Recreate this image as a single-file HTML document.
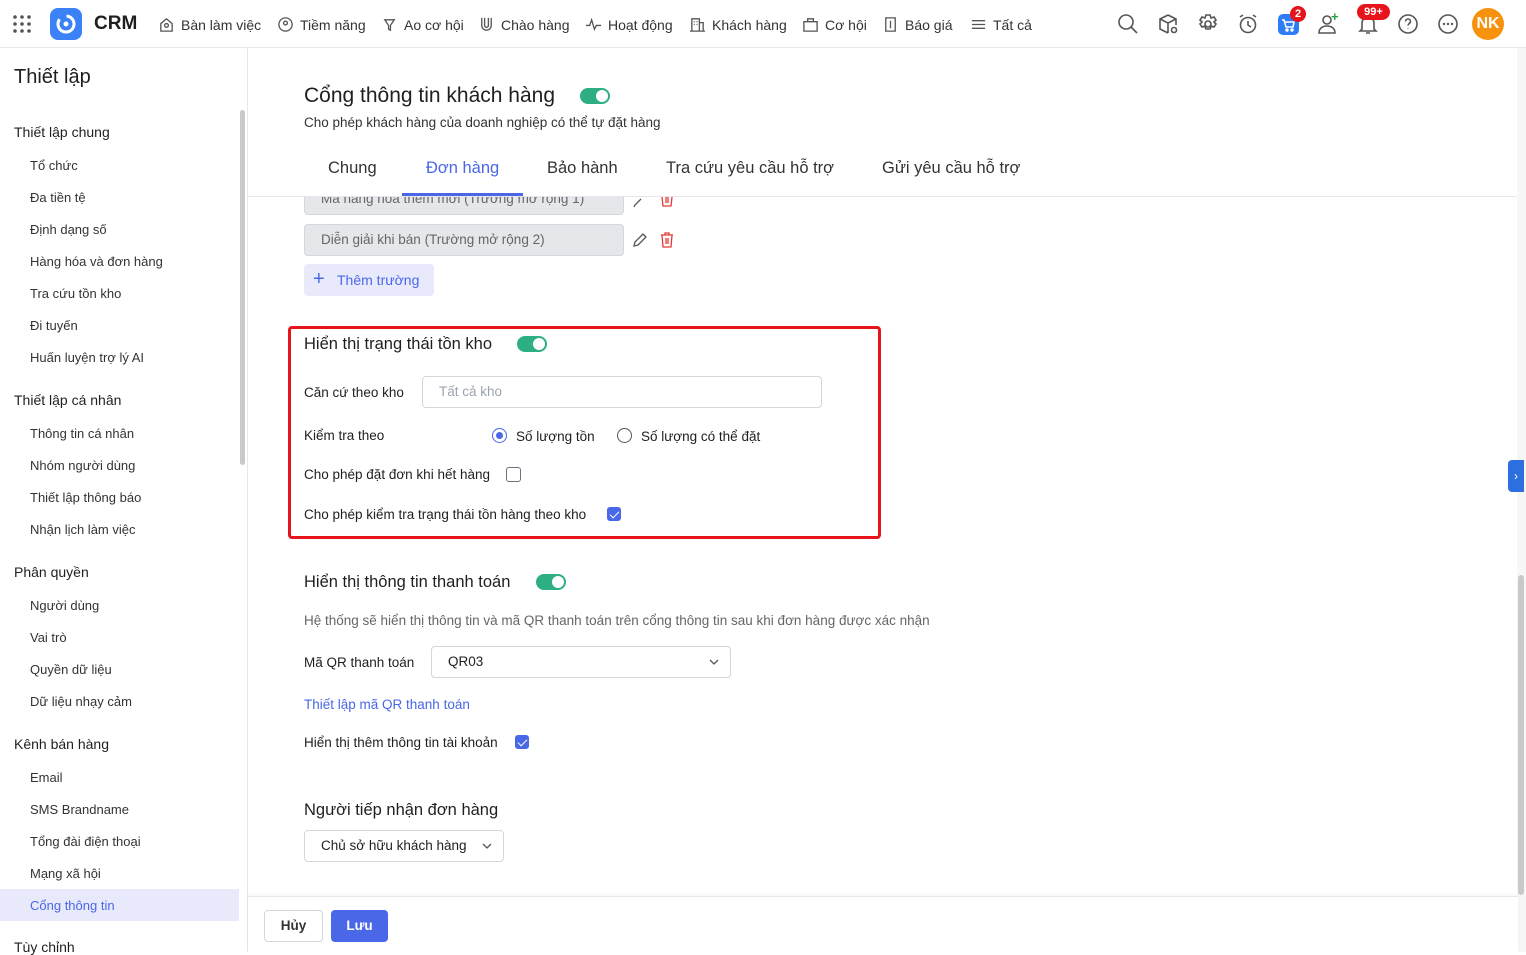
<!DOCTYPE html>
<html><head><meta charset="utf-8"><style>
*{box-sizing:border-box;margin:0;padding:0}
body{width:1526px;height:952px;overflow:hidden;background:#fff;font-family:"Liberation Sans","Noto Sans CJK SC",sans-serif;color:#1f1f1f;font-size:13.5px;position:relative}
.abs{position:absolute}
.hdr{left:0;top:0;width:1526px;height:48px;border-bottom:1px solid #e5e7eb;background:#fff}
.nav{top:16px;font-size:14px;color:#333;display:flex;align-items:center;gap:6px}
.nav svg{width:17px;height:17px;stroke:#555;fill:none;stroke-width:1.4}
.side{left:0;top:48px;width:248px;height:904px;border-right:1px solid #e5e7eb}
.st{position:absolute;left:14px;font-size:14px;color:#1f1f1f}
.si{position:absolute;left:30px;font-size:13px;color:#333}
.t{position:absolute;white-space:nowrap}
.field{position:absolute;left:304px;width:320px;height:32px;background:#e5e7eb;border:1px solid #d4d6db;border-radius:4px;color:#666;font-size:13.5px;padding:7px 16px}
.tog{position:absolute;width:30px;height:16px;border-radius:8px;background:#2eae84}
.tog:after{content:"";position:absolute;right:2px;top:2px;width:12px;height:12px;border-radius:50%;background:#fff}
.cb{position:absolute;width:15px;height:15px;border:1px solid #6b7280;border-radius:3px;background:#fff}
.cb.on{background:#4a67e8;border-color:#4a67e8}
.cb.on:after{content:"";position:absolute;left:4px;top:1px;width:4px;height:8px;border:solid #fff;border-width:0 1.5px 1.5px 0;transform:rotate(45deg)}
.ic{position:absolute;top:13px;width:22px;height:22px}
.ic svg{width:22px;height:22px;stroke:#555;fill:none;stroke-width:1.6}
</style></head><body>
<div class="abs hdr"></div>
<svg class="abs" style="left:12px;top:14px" width="20" height="20"><g fill="#555"><circle cx="3" cy="3" r="1.8"/><circle cx="10" cy="3" r="1.8"/><circle cx="17" cy="3" r="1.8"/><circle cx="3" cy="10" r="1.8"/><circle cx="10" cy="10" r="1.8"/><circle cx="17" cy="10" r="1.8"/><circle cx="3" cy="17" r="1.8"/><circle cx="10" cy="17" r="1.8"/><circle cx="17" cy="17" r="1.8"/></g></svg>
<div class="abs" style="left:50px;top:8px;width:32px;height:32px;border-radius:8px;background:#3b82f6"><svg width="32" height="32"><circle cx="16" cy="16" r="8" stroke="#fff" stroke-width="3" fill="none" stroke-dasharray="30 8"/><circle cx="16" cy="16" r="2.5" fill="#fff"/></svg></div>
<div class="t" style="left:94px;top:13px;font-size:19px;font-weight:bold">CRM</div>
<div class="abs nav" style="left:158px"><svg viewBox="0 0 18 18"><path d="M3 8l6-5 6 5v8H3z"/><circle cx="9" cy="10" r="2"/></svg>Bàn làm việc</div>
<div class="abs nav" style="left:277px"><svg viewBox="0 0 18 18"><circle cx="9" cy="9" r="7"/><circle cx="9" cy="7.5" r="2"/></svg>Tiềm năng</div>
<div class="abs nav" style="left:381px"><svg viewBox="0 0 18 18"><path d="M4 4h10l-4 6v5l-2-1v-4z"/></svg>Ao cơ hội</div>
<div class="abs nav" style="left:478px"><svg viewBox="0 0 18 18"><path d="M4 2v8a5 5 0 0010 0V2M7 2v8a2 2 0 004 0V2"/></svg>Chào hàng</div>
<div class="abs nav" style="left:585px"><svg viewBox="0 0 18 18"><path d="M1 10h4l2-6 3 10 2-4h5"/></svg>Hoạt động</div>
<div class="abs nav" style="left:689px"><svg viewBox="0 0 18 18"><path d="M3 16V3h8v13M11 7h4v9M1 16h16M5 6h1M8 6h1M5 9h1M8 9h1"/></svg>Khách hàng</div>
<div class="abs nav" style="left:802px"><svg viewBox="0 0 18 18"><path d="M2 6h14v10H2zM6 6V3h6v3"/></svg>Cơ hội</div>
<div class="abs nav" style="left:882px"><svg viewBox="0 0 18 18"><path d="M4 2h10v14H4zM9 5v8"/></svg>Báo giá</div>
<div class="abs nav" style="left:970px"><svg viewBox="0 0 18 18"><path d="M2 5h14M2 9h14M2 13h14"/></svg>Tất cả</div>
<div class="ic" style="left:1117px"><svg viewBox="0 0 22 22"><circle cx="9" cy="9" r="7"/><path d="M14 14l6 6"/></svg></div>
<div class="ic" style="left:1157px"><svg viewBox="0 0 22 22"><path d="M11 2l8 4v6M11 2L3 6v10l8 4M3 6l8 4 8-4M11 10v10"/><circle cx="17" cy="17" r="2.5"/></svg></div>
<div class="ic" style="left:1197px"><svg viewBox="0 0 22 22"><circle cx="11" cy="11" r="3"/><path d="M9 2h4l1 3 3-1 2 3-2 2 2 2-2 3-3-1-1 3H9l-1-3-3 1-2-3 2-2-2-2 2-3 3 1z"/></svg></div>
<div class="ic" style="left:1237px"><svg viewBox="0 0 22 22"><circle cx="11" cy="12" r="7.5"/><path d="M11 8v4l3 2M3 4l3-2M19 4l-3-2"/></svg></div>
<div class="abs" style="left:1278px;top:14px;width:21px;height:21px;border-radius:5px;background:#2e7cf6"><svg width="21" height="21" fill="none" stroke="#fff" stroke-width="1.5"><path d="M4 6h2l2 7h7l1-5H7"/><circle cx="9" cy="16" r="1" fill="#fff"/><circle cx="14" cy="16" r="1" fill="#fff"/></svg></div>
<div class="abs" style="left:1290px;top:6px;width:16px;height:16px;border-radius:8px;background:#e8141c;color:#fff;font-size:11px;font-weight:bold;text-align:center;line-height:16px">2</div>
<div class="ic" style="left:1317px"><svg viewBox="0 0 22 22"><circle cx="10" cy="7" r="4"/><path d="M2 20c0-5 4-7 8-7s8 2 8 7z"/></svg></div>
<div class="t" style="left:1331px;top:9px;color:#2ea043;font-weight:bold;font-size:13px">+</div>
<div class="ic" style="left:1357px"><svg viewBox="0 0 22 22"><path d="M5 16V10a6 6 0 0112 0v6l2 2H3zM9 20h4"/></svg></div>
<div class="abs" style="left:1357px;top:4px;width:33px;height:16px;border-radius:8px;background:#e8141c;color:#fff;font-size:11px;font-weight:bold;text-align:center;line-height:16px">99+</div>
<div class="ic" style="left:1397px"><svg viewBox="0 0 22 22"><circle cx="11" cy="11" r="9"/><path d="M8.5 8.5a2.5 2.5 0 115 0c0 2-2.5 2-2.5 4M11 15.5v.5"/></svg></div>
<div class="ic" style="left:1437px"><svg viewBox="0 0 22 22"><circle cx="11" cy="11" r="9"/><g fill="#555" stroke="none"><circle cx="7" cy="11" r="1.2"/><circle cx="11" cy="11" r="1.2"/><circle cx="15" cy="11" r="1.2"/></g></svg></div>
<div class="abs" style="left:1472px;top:8px;width:32px;height:32px;border-radius:50%;background:#f7920e;color:#fff;font-weight:bold;font-size:16px;text-align:center;line-height:32px">NK</div>

<div class="abs side"></div>
<div class="abs" style="left:240px;top:110px;width:5px;height:355px;background:#c9c9c9;border-radius:3px"></div>
<div class="t" style="left:14px;top:66px;font-size:20px">Thiết lập</div>
<div class="st" style="top:124px">Thiết lập chung</div>
<div class="si" style="top:158px">Tổ chức</div>
<div class="si" style="top:190px">Đa tiền tệ</div>
<div class="si" style="top:222px">Định dạng số</div>
<div class="si" style="top:254px">Hàng hóa và đơn hàng</div>
<div class="si" style="top:286px">Tra cứu tồn kho</div>
<div class="si" style="top:318px">Đi tuyến</div>
<div class="si" style="top:350px">Huấn luyện trợ lý AI</div>
<div class="st" style="top:392px">Thiết lập cá nhân</div>
<div class="si" style="top:426px">Thông tin cá nhân</div>
<div class="si" style="top:458px">Nhóm người dùng</div>
<div class="si" style="top:490px">Thiết lập thông báo</div>
<div class="si" style="top:522px">Nhận lịch làm việc</div>
<div class="st" style="top:564px">Phân quyền</div>
<div class="si" style="top:598px">Người dùng</div>
<div class="si" style="top:630px">Vai trò</div>
<div class="si" style="top:662px">Quyền dữ liệu</div>
<div class="si" style="top:694px">Dữ liệu nhạy cảm</div>
<div class="st" style="top:736px">Kênh bán hàng</div>
<div class="si" style="top:770px">Email</div>
<div class="si" style="top:802px">SMS Brandname</div>
<div class="si" style="top:834px">Tổng đài điện thoại</div>
<div class="si" style="top:866px">Mạng xã hội</div>
<div class="abs" style="left:0;top:889px;width:239px;height:32px;background:#e8eafc"></div>
<div class="si" style="top:898px;color:#4a67e8">Cổng thông tin</div>
<div class="st" style="top:939px">Tùy chỉnh</div>

<div class="t" style="left:304px;top:84px;font-size:21px">Cổng thông tin khách hàng</div>
<div class="tog" style="left:580px;top:88px"></div>
<div class="t" style="left:304px;top:115px;color:#333">Cho phép khách hàng của doanh nghiệp có thể tự đặt hàng</div>
<div class="t" style="left:328px;top:159px;font-size:16.5px;color:#333">Chung</div>
<div class="t" style="left:426px;top:159px;font-size:16.5px;color:#4a67e8">Đơn hàng</div>
<div class="abs" style="left:402px;top:193px;width:121px;height:3px;background:#4a67e8"></div>
<div class="t" style="left:547px;top:159px;font-size:16.5px;color:#333">Bảo hành</div>
<div class="t" style="left:666px;top:159px;font-size:16.5px;color:#333">Tra cứu yêu cầu hỗ trợ</div>
<div class="t" style="left:882px;top:159px;font-size:16.5px;color:#333">Gửi yêu cầu hỗ trợ</div>
<div class="abs" style="left:248px;top:196px;width:1270px;height:1px;background:#e5e7eb"></div>

<div class="abs" style="left:248px;top:197px;width:1270px;height:700px;overflow:hidden">
<div class="field" style="top:-14px;left:56px">Mã hàng hóa thêm mới (Trường mở rộng 1)</div>
<div class="field" style="top:27px;left:56px">Diễn giải khi bán (Trường mở rộng 2)</div>
</div>
<svg class="abs" style="left:632px;top:232px" width="16" height="16" fill="none" stroke="#555" stroke-width="1.3"><path d="M2 14l1-4 8-8 3 3-8 8z"/></svg>
<svg class="abs" style="left:659px;top:232px" width="16" height="16" fill="none" stroke="#e53935" stroke-width="1.3"><path d="M2 3h12M6 3V1h4v2M3 3l1 12h8l1-12M7 6v6M9 6v6"/></svg>
<svg class="abs" style="left:632px;top:197px" width="16" height="10" fill="none" stroke="#555" stroke-width="1.3"><path d="M2 10l1-2 6-6"/></svg>
<svg class="abs" style="left:659px;top:197px" width="16" height="10" fill="none" stroke="#e53935" stroke-width="1.3"><path d="M3 0l1 9h8l1-9M7 0v6M9 0v6"/></svg>
<div class="abs" style="left:304px;top:264px;width:130px;height:32px;background:#e8eafc;border-radius:4px;color:#4a67e8;font-size:14px;padding:8px 0 0 33px">Thêm trường</div>
<div class="t" style="left:313px;top:268px;color:#4a67e8;font-size:20px;font-weight:300">+</div>

<div class="abs" style="left:288px;top:326px;width:593px;height:213px;border:3px solid #e8141c;border-radius:4px"></div>
<div class="t" style="left:304px;top:335px;font-size:16.5px">Hiển thị trạng thái tồn kho</div>
<div class="tog" style="left:517px;top:336px"></div>
<div class="t" style="left:304px;top:385px">Căn cứ theo kho</div>
<div class="abs" style="left:422px;top:376px;width:400px;height:32px;border:1px solid #d4d6db;border-radius:4px;color:#9ca3af;padding:7px 16px">Tất cả kho</div>
<div class="t" style="left:304px;top:428px">Kiểm tra theo</div>
<div class="abs" style="left:492px;top:428px;width:15px;height:15px;border-radius:50%;border:1px solid #4a67e8"><div style="margin:3px;width:7px;height:7px;border-radius:50%;background:#4a67e8"></div></div>
<div class="t" style="left:516px;top:429px">Số lượng tồn</div>
<div class="abs" style="left:617px;top:428px;width:15px;height:15px;border-radius:50%;border:1px solid #555"></div>
<div class="t" style="left:641px;top:429px">Số lượng có thể đặt</div>
<div class="t" style="left:304px;top:467px">Cho phép đặt đơn khi hết hàng</div>
<div class="cb" style="left:506px;top:467px"></div>
<div class="t" style="left:304px;top:507px">Cho phép kiểm tra trạng thái tồn hàng theo kho</div>
<div class="cb on" style="left:607px;top:507px;width:14px;height:14px"></div>

<div class="t" style="left:304px;top:573px;font-size:16.5px">Hiển thị thông tin thanh toán</div>
<div class="tog" style="left:536px;top:574px"></div>
<div class="t" style="left:304px;top:613px;color:#666">Hệ thống sẽ hiển thị thông tin và mã QR thanh toán trên cổng thông tin sau khi đơn hàng được xác nhận</div>
<div class="t" style="left:304px;top:655px">Mã QR thanh toán</div>
<div class="abs" style="left:431px;top:646px;width:300px;height:32px;border:1px solid #d4d6db;border-radius:4px;padding:7px 16px">QR03</div>
<svg class="abs" style="left:709px;top:658px" width="10" height="8" fill="none" stroke="#555" stroke-width="1.3"><path d="M1 2l4 4 4-4"/></svg>
<div class="t" style="left:304px;top:697px;color:#4a67e8">Thiết lập mã QR thanh toán</div>
<div class="t" style="left:304px;top:735px">Hiển thị thêm thông tin tài khoản</div>
<div class="cb on" style="left:515px;top:735px;width:14px;height:14px"></div>
<div class="t" style="left:304px;top:801px;font-size:16.5px">Người tiếp nhận đơn hàng</div>
<div class="abs" style="left:304px;top:830px;width:200px;height:32px;border:1px solid #d4d6db;border-radius:4px;padding:7px 16px">Chủ sở hữu khách hàng</div>
<svg class="abs" style="left:482px;top:842px" width="10" height="8" fill="none" stroke="#555" stroke-width="1.3"><path d="M1 2l4 4 4-4"/></svg>

<div class="abs" style="left:1517px;top:48px;width:9px;height:904px;background:#f7f7f7"></div>
<div class="abs" style="left:1518px;top:575px;width:6px;height:320px;background:#c9c9c9;border-radius:3px"></div>
<div class="abs" style="left:1508px;top:460px;width:16px;height:32px;background:#2e6fe0;border-radius:4px 0 0 4px;color:#fff;font-size:12px;text-align:center;line-height:32px">›</div>

<div class="abs" style="left:248px;top:896px;width:1270px;height:56px;border-top:1px solid #e5e7eb;background:#fff;box-shadow:0 -2px 4px rgba(0,0,0,.04)"></div>
<div class="abs" style="left:264px;top:910px;width:59px;height:32px;border:1px solid #d4d6db;border-radius:4px;text-align:center;line-height:30px;font-weight:bold;color:#333">Hủy</div>
<div class="abs" style="left:331px;top:910px;width:57px;height:32px;background:#4a67e8;border-radius:4px;text-align:center;line-height:32px;font-weight:bold;color:#fff">Lưu</div>
</body></html>
